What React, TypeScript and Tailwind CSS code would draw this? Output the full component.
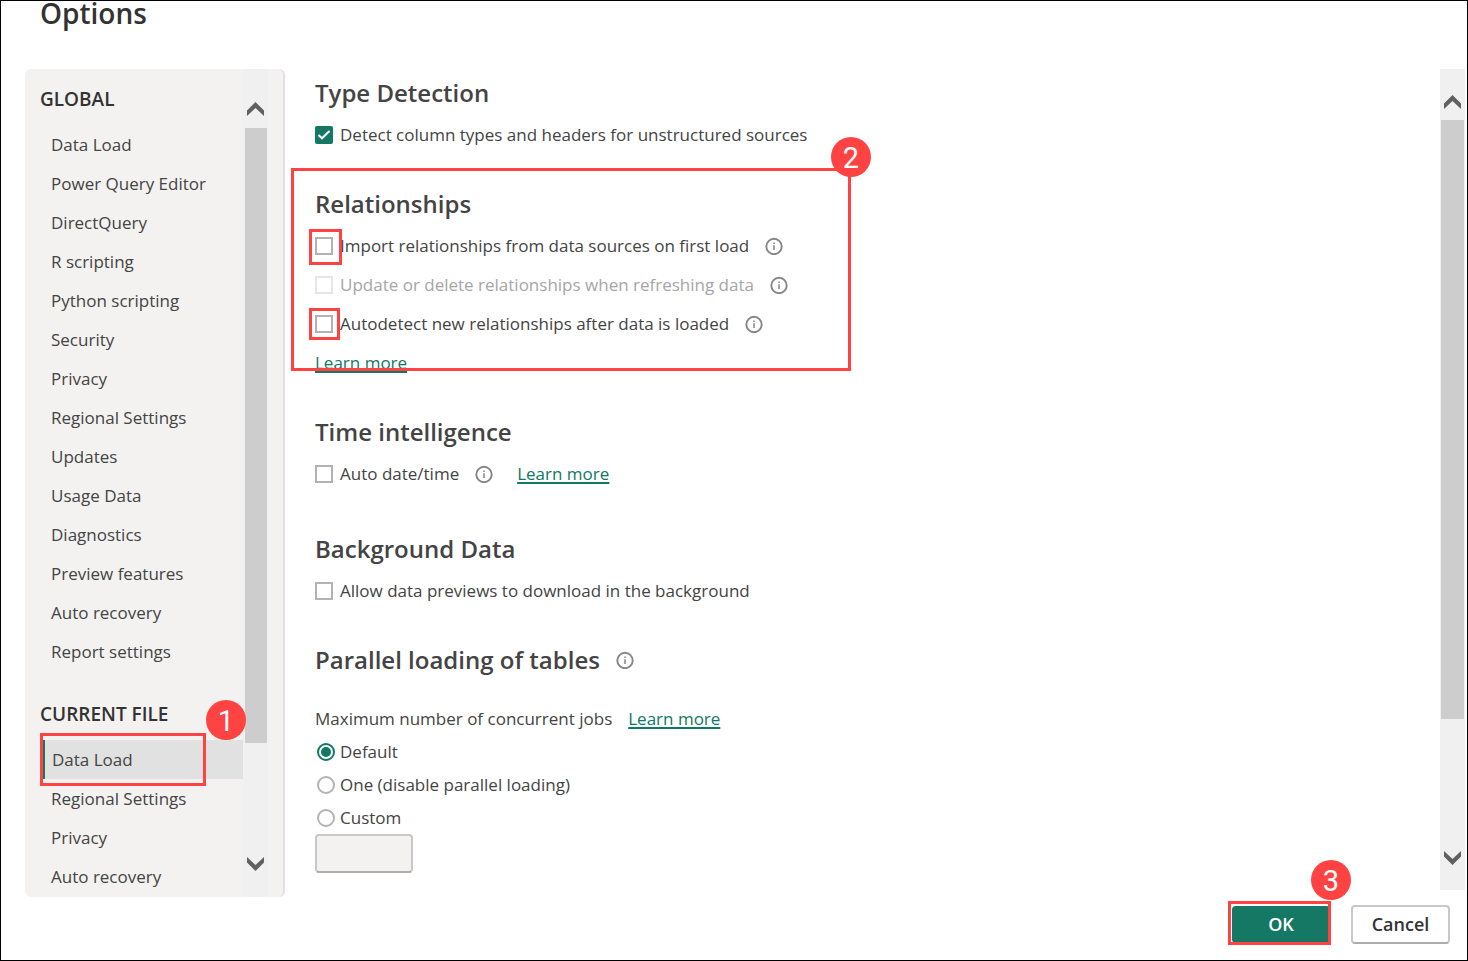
import { useState, type ReactNode } from "react";

const globalItems = [
  "Data Load",
  "Power Query Editor",
  "DirectQuery",
  "R scripting",
  "Python scripting",
  "Security",
  "Privacy",
  "Regional Settings",
  "Updates",
  "Usage Data",
  "Diagnostics",
  "Preview features",
  "Auto recovery",
  "Report settings",
];

const currentFileItems = ["Data Load", "Regional Settings", "Privacy", "Auto recovery"];

function Chevron({ down = false }: { down?: boolean }) {
  return (
    <svg width="17" height="14" viewBox="0 0 17 14" fill="#606060" aria-hidden="true">
      {down ? (
        <path d="M0 0 8.5 8 17 0v5.5L8.5 14 0 5.5z" />
      ) : (
        <path d="M0 14 8.5 6 17 14V8.5L8.5 0 0 8.5z" />
      )}
    </svg>
  );
}

function InfoButton({ about }: { about: string }) {
  return (
    <button type="button" aria-label={`About ${about}`} className="shrink-0">
      <svg width="18" height="18" viewBox="0 0 18 18" fill="none" aria-hidden="true">
        <circle cx="9" cy="9.5" r="7.7" stroke="#858585" strokeWidth="1.9" />
        <path d="M9 8.2v4.8" stroke="#858585" strokeWidth="1.5" />
        <path d="M9 5.6v1.5" stroke="#858585" strokeWidth="1.5" />
      </svg>
    </button>
  );
}

function Badge({ children, className }: { children: ReactNode; className: string }) {
  return (
    <span
      className={`absolute z-20 flex size-10 items-center justify-center rounded-full bg-[#ff4343] pt-[2px] font-['Roboto',sans-serif] text-[29px] leading-none font-normal text-white ${className}`}
    >
      {children}
    </span>
  );
}

function Outline({ className }: { className: string }) {
  return <span aria-hidden="true" className={`pointer-events-none absolute z-10 border-3 border-[#ff4343] ${className}`} />;
}

function CheckRow({
  id,
  label,
  defaultChecked = false,
  disabled = false,
  info = false,
  outline,
  children,
}: {
  id: string;
  label: string;
  defaultChecked?: boolean;
  disabled?: boolean;
  info?: boolean;
  outline?: string;
  children?: ReactNode;
}) {
  return (
    <div className="flex h-[39px] items-center">
      <span className="relative mr-[7px] grid size-[18px] shrink-0">
        <input
          id={id}
          type="checkbox"
          defaultChecked={defaultChecked}
          disabled={disabled}
          className="peer col-start-1 row-start-1 size-[18px] appearance-none border-2 border-[#b3b3b3] bg-white checked:rounded-xs checked:border-[#157864] checked:bg-[#157864] disabled:border-[#e6e6e6]"
        />
        <svg
          viewBox="0 0 18 18"
          fill="none"
          aria-hidden="true"
          className="pointer-events-none col-start-1 row-start-1 size-[18px] opacity-0 peer-checked:opacity-100"
        >
          <path d="M3.5 9 7 12.3l7.5-7.3" stroke="#fff" strokeWidth="2" />
        </svg>
        {outline && <Outline className={outline} />}
      </span>
      <label htmlFor={id} className={disabled ? "text-[#a6a6a6]" : ""}>
        {label}
      </label>
      {info && (
        <span className="ml-4 flex">
          <InfoButton about={label} />
        </span>
      )}
      {children}
    </div>
  );
}

function LearnMore({ className = "" }: { className?: string }) {
  return (
    <a href="#learn-more" className={`text-[#117865] underline decoration-2 underline-offset-2 ${className}`}>
      Learn more
    </a>
  );
}

function SectionTitle({ children }: { children: ReactNode }) {
  return <h2 className="flex h-11 items-center text-[24px] font-semibold text-[#444]">{children}</h2>;
}

function NavHeading({ children }: { children: ReactNode }) {
  return <h2 className="mb-[11px] pl-[15px] text-[19px] leading-[30px] font-semibold text-[#333]">{children}</h2>;
}

function NavLink({ label }: { label: string }) {
  return (
    <a href="#section" className="flex h-[39px] items-center pl-[26px]">
      {label}
    </a>
  );
}

export default function App() {
  const [jobs, setJobs] = useState("Default");

  return (
    <div className="flex min-h-screen flex-col border border-black bg-white font-['Open_Sans','Noto_Sans',sans-serif] text-[17px] text-[#444]">
      <header className="h-[68px] pl-[39px]">
        <h1 className="text-[28px] leading-[24px] font-semibold text-[#333]">Options</h1>
      </header>

      <div className="flex flex-1">
        <aside className="ml-6 flex w-[260px] shrink-0 rounded-md border-r-2 border-[#e1e1e1] bg-[#f3f2f1]">
          <nav aria-label="Options" className="flex-1 pt-[15px]">
            <NavHeading>GLOBAL</NavHeading>
            <ul className="mb-7">
              {globalItems.map((item) => (
                <li key={item}>
                  <NavLink label={item} />
                </li>
              ))}
            </ul>
            <NavHeading>CURRENT FILE</NavHeading>
            <ul>
              {currentFileItems.map((item, index) =>
                index === 0 ? (
                  <li key={item} className="relative pl-[18px]">
                    <a
                      href="#section"
                      aria-current="page"
                      className="flex h-[39px] items-center border-l-2 border-[#117865] bg-[#e1e1e1] pl-[7px]"
                    >
                      {item}
                    </a>
                    <Outline className="-top-[7px] left-[15px] h-[53px] w-[166px]" />
                    <Badge className="-top-10 left-[181px]">1</Badge>
                  </li>
                ) : (
                  <li key={item}>
                    <NavLink label={item} />
                  </li>
                ),
              )}
            </ul>
          </nav>
          <div className="mr-[15px] flex w-[25px] flex-col items-center bg-[#f0f0f0]">
            <button type="button" aria-label="Scroll menu up" className="flex h-[59px] items-end pb-3">
              <Chevron />
            </button>
            <div className="w-[22px] flex-[615] bg-[#cdcdcd]" />
            <div className="flex-[100]" />
            <button type="button" aria-label="Scroll menu down" className="flex h-[54px] items-start pt-[14px]">
              <Chevron down />
            </button>
          </div>
        </aside>

        <main className="flex-1 pt-[2px] pl-[30px]">
          <section className="mb-7">
            <SectionTitle>Type Detection</SectionTitle>
            <CheckRow id="detect" label="Detect column types and headers for unstructured sources" defaultChecked />
          </section>

          <section className="relative mb-7">
            <SectionTitle>Relationships</SectionTitle>
            <CheckRow
              id="import"
              label="Import relationships from data sources on first load"
              info
              outline="-top-2 -left-[6px] h-9 w-[33px]"
            />
            <CheckRow id="update" label="Update or delete relationships when refreshing data" disabled info />
            <CheckRow
              id="autodetect"
              label="Autodetect new relationships after data is loaded"
              info
              outline="-top-[7px] -left-[6px] h-8 w-[31px]"
            />
            <div className="flex h-[39px] items-center">
              <LearnMore />
            </div>
            <Outline className="-top-[14px] -left-6 h-[203px] w-[560px]" />
            <Badge className="-top-[45px] left-[516px]">2</Badge>
          </section>

          <section className="mb-[34px]">
            <SectionTitle>Time intelligence</SectionTitle>
            <CheckRow id="auto-date" label="Auto date/time" info>
              <LearnMore className="ml-6" />
            </CheckRow>
          </section>

          <section className="mb-7">
            <SectionTitle>Background Data</SectionTitle>
            <CheckRow id="previews" label="Allow data previews to download in the background" />
          </section>

          <section>
            <SectionTitle>
              Parallel loading of tables
              <span className="ml-4 flex">
                <InfoButton about="parallel loading" />
              </span>
            </SectionTitle>
            <fieldset className="mt-5">
              <legend className="flex h-[33px] items-center">
                Maximum number of concurrent jobs
                <LearnMore className="ml-4" />
              </legend>
              {["Default", "One (disable parallel loading)", "Custom"].map((option) => (
                <label key={option} className="flex h-[33px] items-center gap-[5px] pl-[2px]">
                  <input
                    type="radio"
                    name="jobs"
                    checked={jobs === option}
                    onChange={() => setJobs(option)}
                    className="size-[18px] appearance-none rounded-full border-2 border-[#b3b3b3] bg-white bg-clip-content p-[2px] checked:border-[#117865] checked:bg-[#117865]"
                  />
                  {option}
                </label>
              ))}
              <input
                type="text"
                aria-label="Custom number of jobs"
                disabled={jobs !== "Custom"}
                className="block h-[39px] w-[98px] rounded-sm border-2 border-[#c8c8c8] border-b-[#adadad] bg-[#f3f2f1] px-2"
              />
            </fieldset>
          </section>
        </main>

        <div className="mr-[2px] mb-[7px] flex w-[25px] shrink-0 flex-col items-center bg-[#f0f0f0]">
          <button type="button" aria-label="Scroll up" className="flex h-[51px] items-end pb-[11px]">
            <Chevron />
          </button>
          <div className="w-[23px] flex-[599] bg-[#cdcdcd]" />
          <div className="flex-[117]" />
          <button type="button" aria-label="Scroll down" className="flex h-[54px] items-start pt-[15px]">
            <Chevron down />
          </button>
        </div>
      </div>

      <footer className="flex justify-end gap-5 pt-2 pr-[17px] pb-4">
        <div className="relative">
          <button
            type="button"
            className="block h-[39px] w-[100px] rounded-sm border border-white bg-[#157864] bg-clip-padding text-[18px] font-semibold text-white"
          >
            OK
          </button>
          <Outline className="-top-1 right-0 -bottom-[1px] -left-[3px]" />
          <Badge className="-top-[45px] left-20">3</Badge>
        </div>
        <button
          type="button"
          className="h-[39px] w-[99px] rounded-sm border-2 border-[#c8c8c8] border-b-[#adadad] bg-white text-[18px] font-semibold text-[#333]"
        >
          Cancel
        </button>
      </footer>
    </div>
  );
}
